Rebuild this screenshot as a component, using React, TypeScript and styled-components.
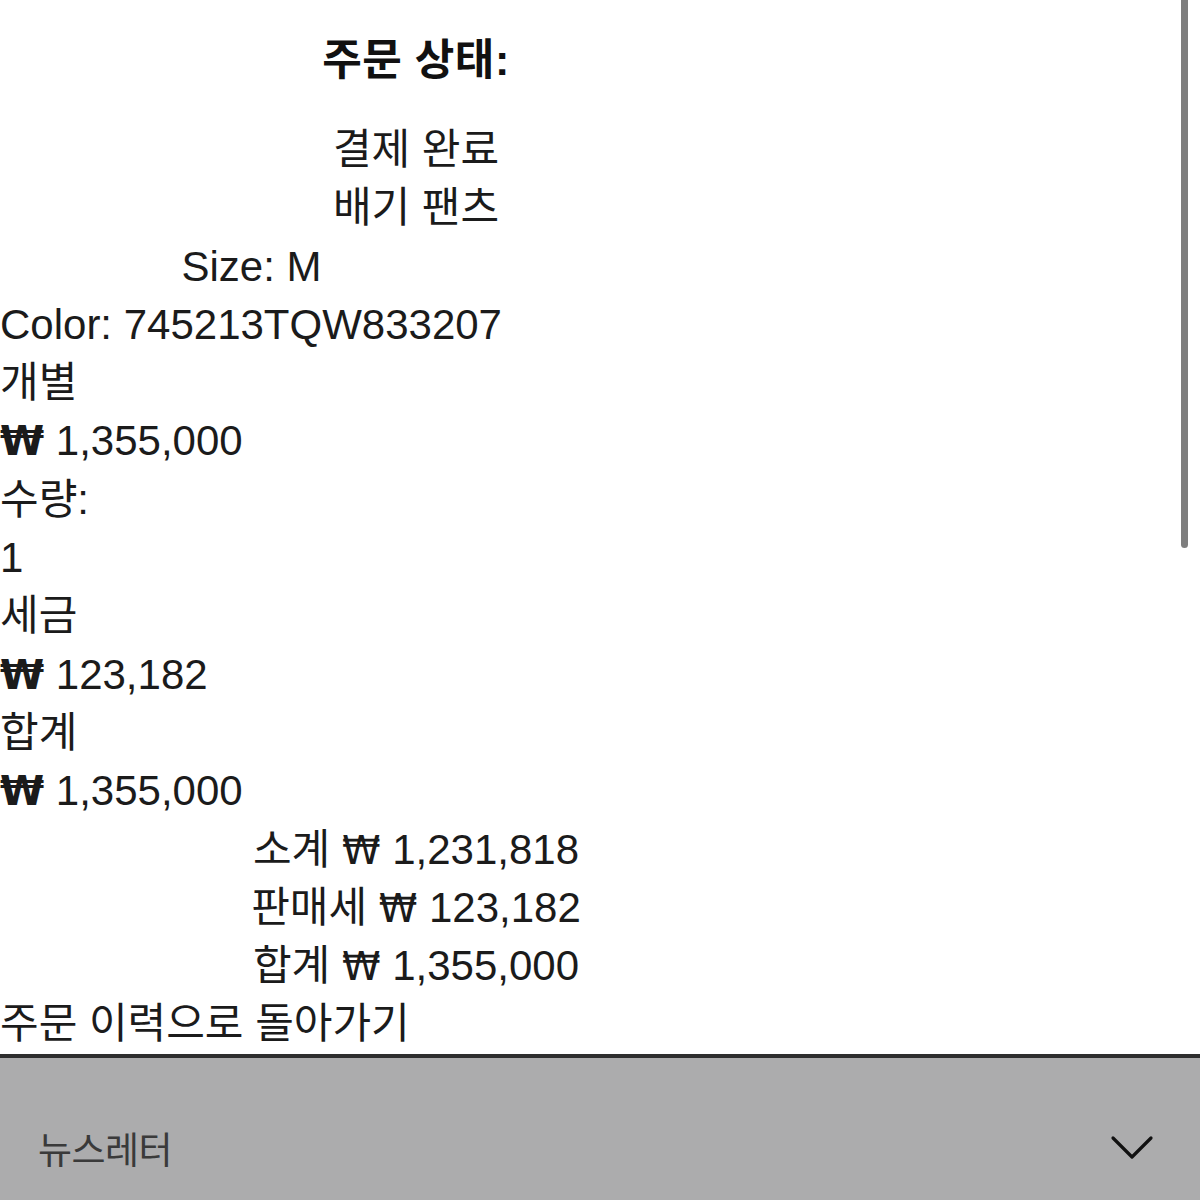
import styled, { createGlobalStyle } from "styled-components"

const GlobalStyle = createGlobalStyle`
  html, body {
    margin: 0;
    padding: 0;
    background: #ffffff;
  }
  body {
    font-family: "Liberation Sans", "Noto Sans CJK KR", sans-serif;
    color: #1b1b1b;
    -webkit-font-smoothing: antialiased;
  }
`

const Page = styled.div`
  position: relative;
  width: 1200px;
  height: 1200px;
  overflow: hidden;
  display: flex;
  flex-direction: column;
`

const Content = styled.main`
  width: 832px;
  padding-top: 31px;
  display: flex;
  flex-direction: column;
`

const Title = styled.h1`
  margin: 0 0 32px;
  height: 58px;
  font-size: 43px;
  line-height: 58px;
  font-weight: 700;
  text-align: center;
  letter-spacing: 0.5px;
  color: #111;
`

const Line = styled.div<{ $align?: "left" | "center" }>`
  height: 58.3px;
  overflow: visible;
  font-size: 42px;
  line-height: 58.3px;
  text-align: ${(p) => p.$align ?? "left"};
  white-space: nowrap;
  color: #1b1b1b;
`

const ItemBlock = styled.div`
  width: 503px;
  display: flex;
  flex-direction: column;
`

const Won = styled.span<{ $bold?: boolean }>`
  font-family: "DejaVu Sans", "Noto Sans CJK KR", sans-serif;
  font-weight: ${(p) => (p.$bold ? 700 : 400)};
  font-size: ${(p) => (p.$bold ? "40px" : "39px")};
  line-height: 0;
`

const BackLink = styled.a`
  display: block;
  height: 58.3px;
  font-size: 42px;
  line-height: 58.3px;
  color: #1b1b1b;
  text-decoration: none;
  white-space: nowrap;
`

const Footer = styled.footer`
  flex: 1;
  background: #acacad;
  border-top: 4px solid #2e2e2e;
  padding: 65px 46px 0 38px;
`

const FooterRow = styled.div`
  display: flex;
  align-items: center;
  justify-content: space-between;
`

const FooterTitle = styled.span`
  font-family: "Noto Sans CJK KR", sans-serif;
  font-size: 37px;
  line-height: 50px;
  color: #3a3a3a;
  letter-spacing: -0.5px;
`

const Scrollbar = styled.div`
  position: absolute;
  top: 0;
  right: 12px;
  width: 7px;
  height: 548px;
  border-radius: 0 0 4px 4px;
  background: #7e7e7e;
`

const Chevron = () => (
  <svg width="44" height="26" viewBox="0 0 44 26" fill="none">
    <polyline points="3,3 22,22 41,3" stroke="#111" strokeWidth="3.2" strokeLinecap="round" strokeLinejoin="round" />
  </svg>
)

const Price = ({ value, bold }: { value: string; bold?: boolean }) => (
  <>
    <Won $bold={bold}>₩</Won> {value}
  </>
)

export default function App() {
  return (
    <>
      <GlobalStyle />
      <Page>
        <Content>
          <Title>주문 상태:</Title>
          <Line $align="center">결제 완료</Line>
          <Line $align="center">배기 팬츠</Line>
          <ItemBlock>
            <Line $align="center">Size: M</Line>
            <Line>Color: 745213TQW833207</Line>
          </ItemBlock>
          <Line>개별</Line>
          <Line><Price bold value="1,355,000" /></Line>
          <Line>수량:</Line>
          <Line>1</Line>
          <Line>세금</Line>
          <Line><Price bold value="123,182" /></Line>
          <Line>합계</Line>
          <Line><Price bold value="1,355,000" /></Line>
          <Line $align="center">소계 <Price value="1,231,818" /></Line>
          <Line $align="center">판매세 <Price value="123,182" /></Line>
          <Line $align="center">합계 <Price value="1,355,000" /></Line>
          <BackLink href="#">주문 이력으로 돌아가기</BackLink>
        </Content>
        <Footer>
          <FooterRow>
            <FooterTitle>뉴스레터</FooterTitle>
            <Chevron />
          </FooterRow>
        </Footer>
        <Scrollbar />
      </Page>
    </>
  )
}
